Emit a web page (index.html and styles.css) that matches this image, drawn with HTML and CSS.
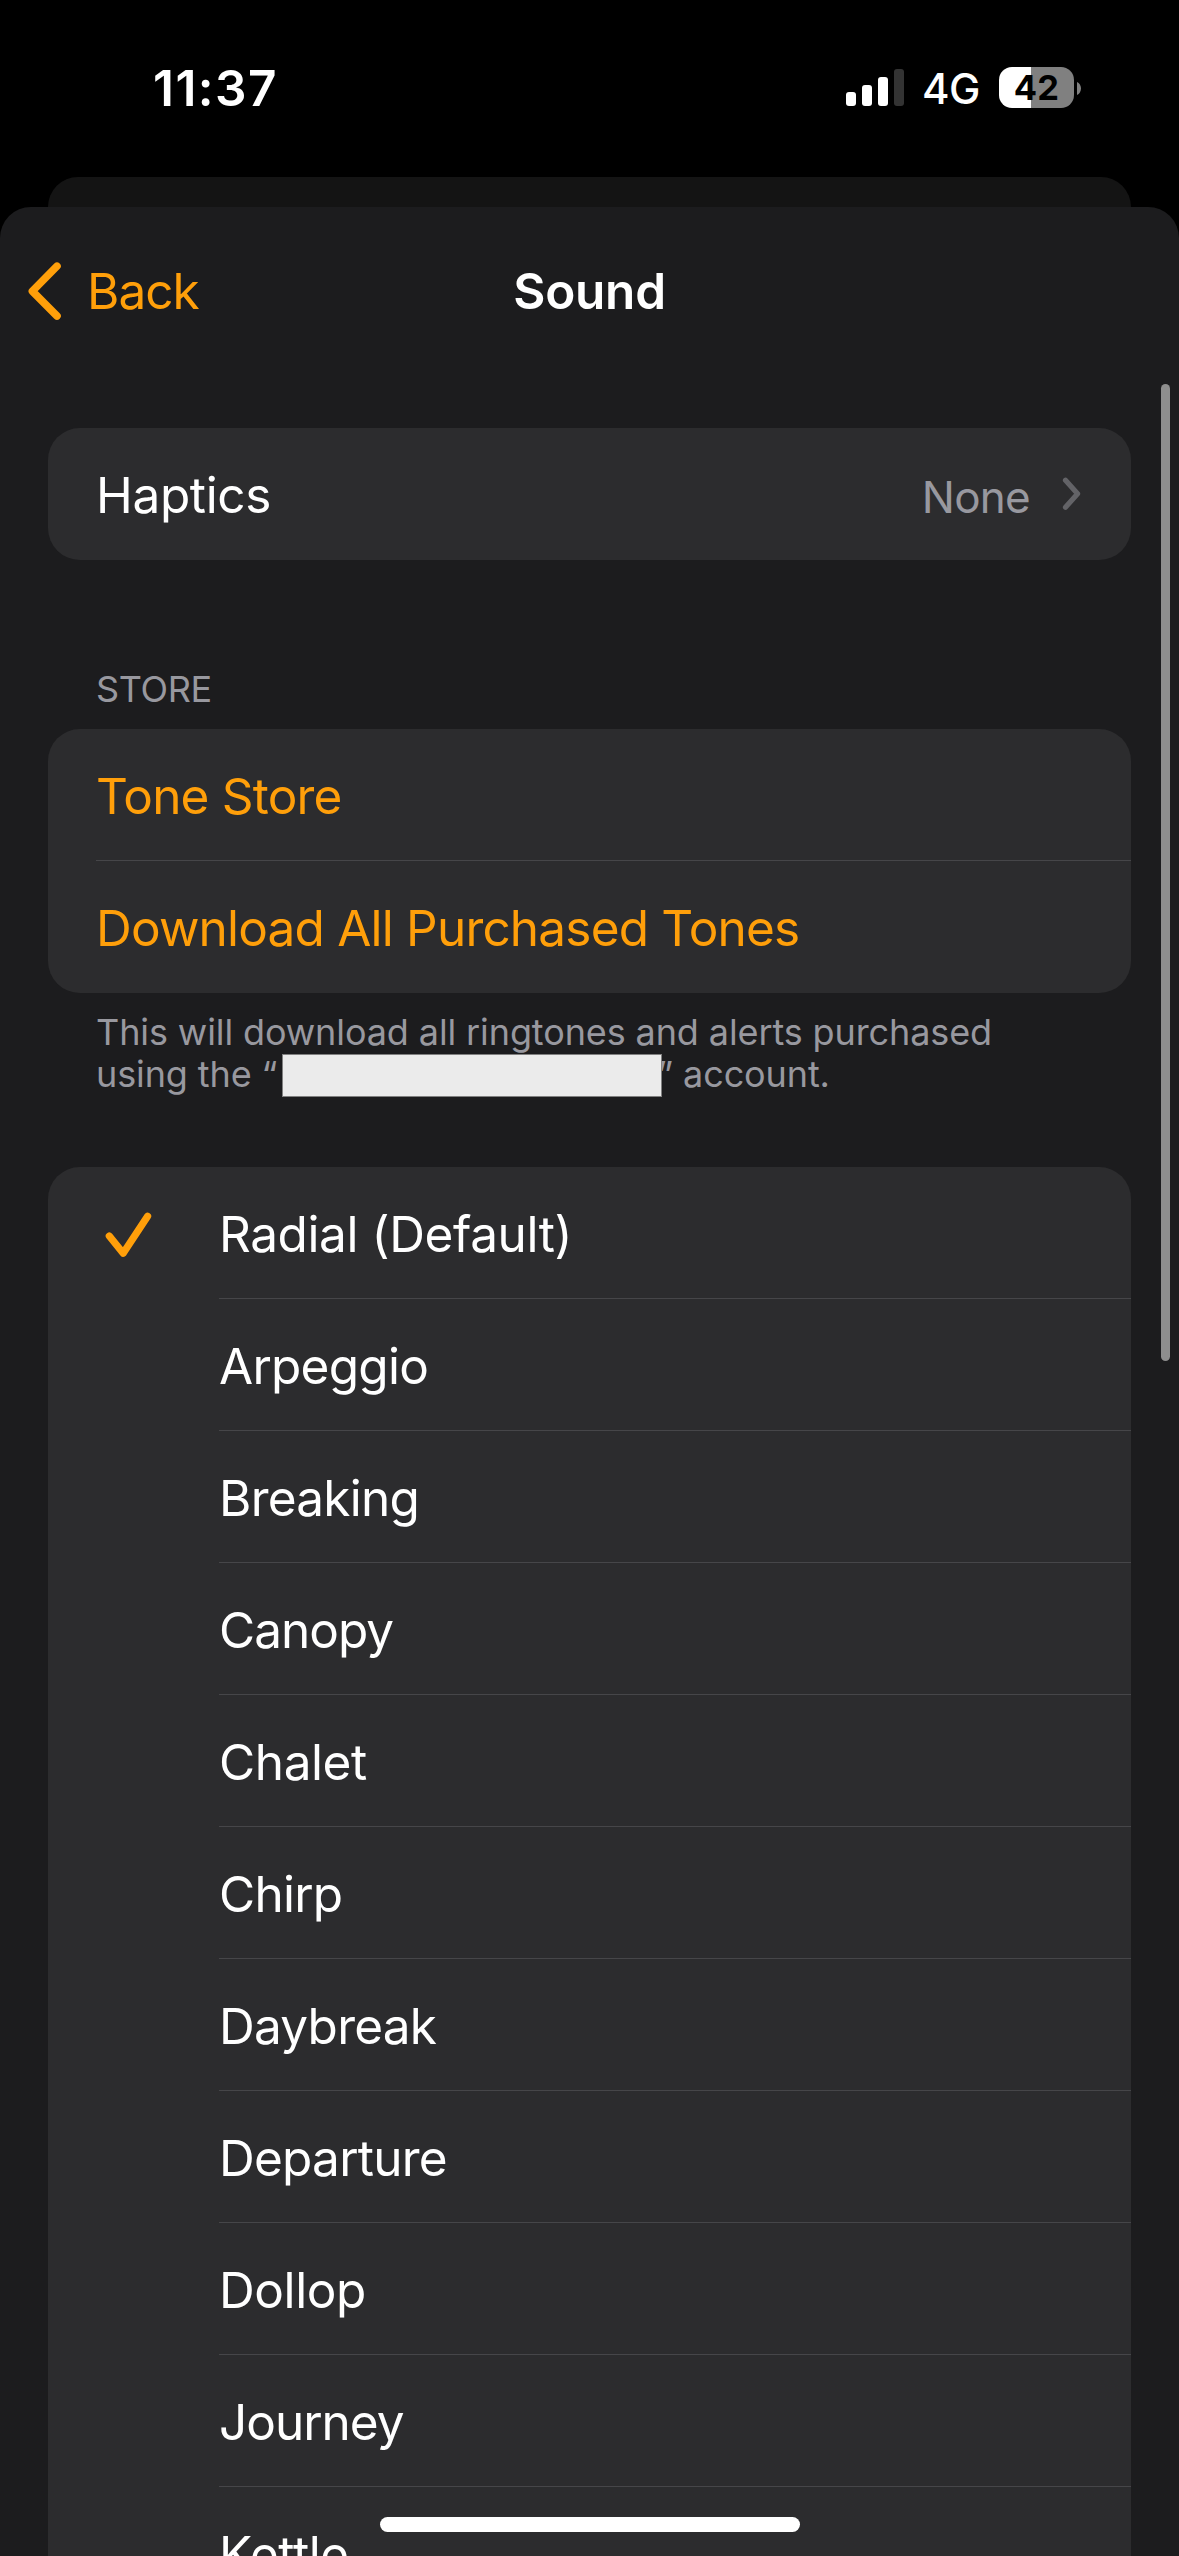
FILE: index.html
```
<!DOCTYPE html>
<html lang="en">
<head>
<meta charset="utf-8">
<title>Sound</title>
<link rel="stylesheet" href="styles.css">
</head>
<body>
<div class="phone">
  <header class="status">
    <span class="time">11:37</span>
    <div class="indicators">
      <svg class="signal" width="58" height="37" viewBox="0 0 58 37">
        <rect x="0" y="23" width="10" height="14" rx="3" fill="#fff"/>
        <rect x="16" y="16" width="10" height="21" rx="3" fill="#fff"/>
        <rect x="32" y="8" width="10" height="29" rx="3" fill="#fff"/>
        <rect x="48" y="0" width="10" height="37" rx="3" fill="#333"/>
      </svg>
      <span class="network">4G</span>
      <span class="battery">42</span>
      <svg class="nub" width="4" height="13" viewBox="0 0 4 13"><path d="M0 0C2.4 1.2 4 3.6 4 6.5S2.4 11.8 0 13Z" fill="#808080"/></svg>
    </div>
  </header>
  <div class="sheet-behind"></div>
  <main class="sheet">
    <nav class="nav">
      <a class="back">
        <svg width="36" height="60" viewBox="0 0 36 60"><path d="M30 5.2 5.4 30.2 30 55" fill="none" stroke="#ff9f0a" stroke-width="7.6" stroke-linecap="round" stroke-linejoin="round"/></svg>
        <span>Back</span>
      </a>
      <h1 class="title">Sound</h1>
    </nav>

    <section class="card haptics">
      <div class="row">
        <div class="label">
          <span class="name">Haptics</span>
          <span class="value">None</span>
          <svg class="chevron" width="20" height="34" viewBox="0 0 20 34"><path d="M4.5 3.3 16.6 16.8 4.5 30.2" fill="none" stroke="#636367" stroke-width="5.2" stroke-linecap="round" stroke-linejoin="round"/></svg>
        </div>
      </div>
    </section>

    <h2 class="section-title">STORE</h2>
    <section class="card store">
      <div class="row"><div class="label">Tone Store</div></div>
      <div class="row"><div class="label">Download All Purchased Tones</div></div>
    </section>
    <div class="footnote">
      <div>This will download all ringtones and alerts purchased</div>
      <div class="account-line"><span>using the “</span><span class="redacted"></span><span class="tail">” account.</span></div>
    </div>

    <section class="card tones">
      <div class="row">
        <div class="mark"><svg width="48" height="48" viewBox="0 0 48 48"><path d="M5.3 26 19.2 43.2 43.6 6.3" fill="none" stroke="#ff9f0a" stroke-width="7.2" stroke-linecap="round" stroke-linejoin="round"/></svg></div>
        <div class="label loose">Radial (Default)</div>
      </div>
      <div class="row"><div class="mark"></div><div class="label">Arpeggio</div></div>
      <div class="row"><div class="mark"></div><div class="label">Breaking</div></div>
      <div class="row"><div class="mark"></div><div class="label tight">Canopy</div></div>
      <div class="row"><div class="mark"></div><div class="label loose">Chalet</div></div>
      <div class="row"><div class="mark"></div><div class="label">Chirp</div></div>
      <div class="row"><div class="mark"></div><div class="label">Daybreak</div></div>
      <div class="row"><div class="mark"></div><div class="label">Departure</div></div>
      <div class="row"><div class="mark"></div><div class="label loose">Dollop</div></div>
      <div class="row"><div class="mark"></div><div class="label tight">Journey</div></div>
      <div class="row"><div class="mark"></div><div class="label loose">Kettle</div></div>
    </section>
  </main>
  <div class="scrollbar"></div>
  <div class="home-indicator"></div>
</div>
</body>
</html>
```
FILE: styles.css
```
* { box-sizing: border-box; }

body {
  margin: 0;
  background: #000;
  font-family: Inter, "Liberation Sans", sans-serif;
  font-size: 49.5px;
  letter-spacing: -0.75px;
  color: #fff;
}

.phone {
  position: relative;
  display: flex;
  flex-direction: column;
  width: 1179px;
  height: 2556px;
  overflow: hidden;
}

/* Status bar */
.status {
  display: flex;
  justify-content: space-between;
  height: 177px;
  flex: none;
  padding: 58px 98px 59px 153px;
  line-height: 60px;
}
.time { font-weight: 600; letter-spacing: 1.45px; }
.indicators { display: flex; align-items: center; }
.signal { margin-bottom: 1px; }
.network {
  width: 55px;
  margin-left: 18px;
  margin-right: 22px;
  font-size: 42px;
  font-weight: 500;
  letter-spacing: -0.5px;
  padding-top: 1px;
}
.battery {
  width: 75px;
  height: 41px;
  margin-bottom: 1px;
  border-radius: 13px;
  background: linear-gradient(to right, #fff 32px, #808080 32px);
  color: #000;
  font-size: 34.5px;
  font-weight: 700;
  letter-spacing: 0.3px;
  line-height: 41px;
  text-align: center;
}
.nub { margin-left: 3px; }

/* Sheets */
.sheet-behind {
  flex: none;
  height: 70px;
  margin: 0 48px -40px;
  border-radius: 30px 30px 0 0;
  background: #141414;
}
.sheet {
  position: relative;
  flex: none;
  height: 2349px;
  overflow: hidden;
  padding: 0 48px;
  border-radius: 31px 31px 0 0;
  background: #1c1c1e;
}

.nav {
  display: grid;
  grid-template-columns: 1fr auto 1fr;
  align-items: center;
  height: 168px;
  margin: 0 -48px 53px;
  padding: 0 27px;
}
.back {
  display: flex;
  align-items: center;
  gap: 24px;
  color: #ff9f0a;
  letter-spacing: -1px;
}
.title {
  margin: 0;
  font-size: 49.5px;
  font-weight: 600;
  letter-spacing: -0.25px;
}

/* Grouped lists */
.card {
  overflow: hidden;
  border-radius: 32px;
  background: #2c2c2e;
}
.row { display: flex; height: 132px; }
.label {
  flex: 1;
  display: flex;
  align-items: center;
  padding-top: 3px;
  border-bottom: 1px solid #464649;
}
.row:last-child .label { border-bottom-color: transparent; }
.loose { letter-spacing: -0.4px; }
.tight { letter-spacing: -1px; }

.haptics .row { padding-left: 48px; }
.haptics .label { padding-right: 50px; }
.name { flex: 1; letter-spacing: -0.35px; }
.value {
  padding-top: 4px;
  font-size: 44px;
  color: #98989f;
}
.chevron { margin: 0 0 3px 31px; }

.section-title {
  margin: 108px 0 19px 48px;
  font-size: 36px;
  font-weight: 400;
  line-height: 42px;
  letter-spacing: -0.35px;
  color: #98989f;
}

.store .row { padding-left: 48px; color: #ff9f0a; letter-spacing: -0.8px; }

.footnote {
  margin: 18px 0 72px 48px;
  font-size: 36px;
  line-height: 42px;
  letter-spacing: -0.11px;
  color: #98989f;
}
.account-line { display: flex; height: 42px; white-space: pre; }
.redacted {
  position: relative;
  z-index: 1;
  width: 380px;
  height: 43px;
  margin: 1px 0 0 5px;
  border: 1px solid #808080;
  background: #ebebeb;
}
.tail { margin-left: -5px; }

.mark {
  display: flex;
  align-items: center;
  width: 171px;
  padding: 1px 0 0 56px;
}

/* Overlays */
.scrollbar {
  position: absolute;
  top: 384px;
  right: 9px;
  width: 9px;
  height: 977px;
  border-radius: 5px;
  background: #8e8e8e;
}
.home-indicator {
  position: absolute;
  bottom: 24px;
  left: 380px;
  width: 420px;
  height: 15px;
  border-radius: 8px;
  background: #fff;
}
```
